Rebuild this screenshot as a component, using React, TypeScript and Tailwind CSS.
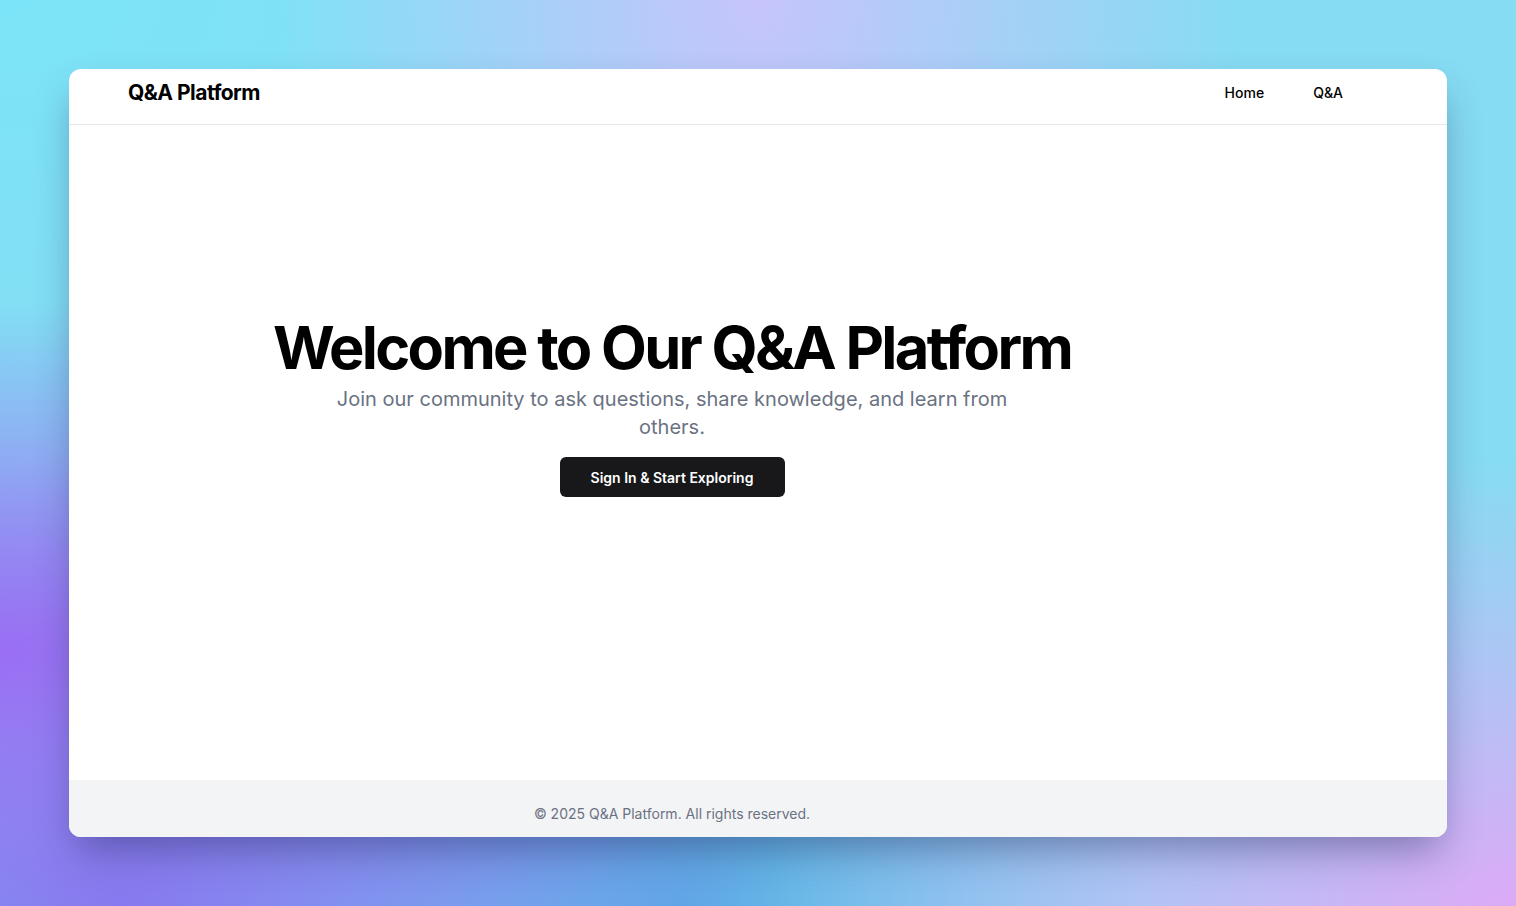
import React from "react";

const font = { fontFamily: "Inter, 'Liberation Sans', sans-serif" };

export default function App() {
  return (
    <div
      style={font}
      className="flex h-[906px] w-full items-start justify-center bg-[#86dcf2] bg-[radial-gradient(ellipse_at_0%_72%,#9a6ef3_0%,transparent_38%),radial-gradient(ellipse_at_50%_0%,#c6c4fb_0%,transparent_45%),radial-gradient(ellipse_at_100%_100%,#dcaaf7_0%,transparent_35%),radial-gradient(ellipse_at_8%_100%,#7f7cee_0%,transparent_35%),radial-gradient(ellipse_at_45%_100%,#5aaee4_0%,transparent_40%),radial-gradient(ellipse_at_0%_0%,#7ce4f8_0%,transparent_40%)] pt-[69px]"
    >
      <div className="flex h-[768px] w-[1378px] flex-col overflow-hidden rounded-xl bg-white shadow-[0_20px_40px_-8px_rgba(30,40,90,0.45)]">
        {/* header */}
        <header className="flex h-[56px] shrink-0 items-center justify-between border-b border-gray-200 pb-[8px] pl-[59px] pr-[104px]">
          <a className="text-[21px] font-bold tracking-tight text-black">Q&amp;A Platform</a>
          <nav className="flex items-center gap-[49px] text-[14px] font-medium text-black">
            <a>Home</a>
            <a>Q&amp;A</a>
          </nav>
        </header>

        {/* hero */}
        <main className="flex w-[1206px] flex-1 flex-col items-center justify-center pb-[92px]">
          <h1 className="pt-[2px] text-[59.5px] font-bold leading-none tracking-[-0.045em] text-black">
            Welcome to Our Q&amp;A Platform
          </h1>
          <p className="mt-[8px] max-w-[680px] text-center text-[20px] leading-[28px] text-gray-500">
            Join our community to ask questions, share knowledge, and learn from others.
          </p>
          <button className="mt-[16px] h-[40px] w-[225px] rounded-md bg-[#18181b] text-[14px] font-semibold text-white">
            Sign In &amp; Start Exploring
          </button>
        </main>

        {/* footer */}
        <footer className="flex h-[57px] shrink-0 items-center bg-gray-100 pt-[9px]">
          <p className="w-[1206px] text-center text-[14px] text-gray-500">
            © 2025 Q&amp;A Platform. All rights reserved.
          </p>
        </footer>
      </div>
    </div>
  );
}
